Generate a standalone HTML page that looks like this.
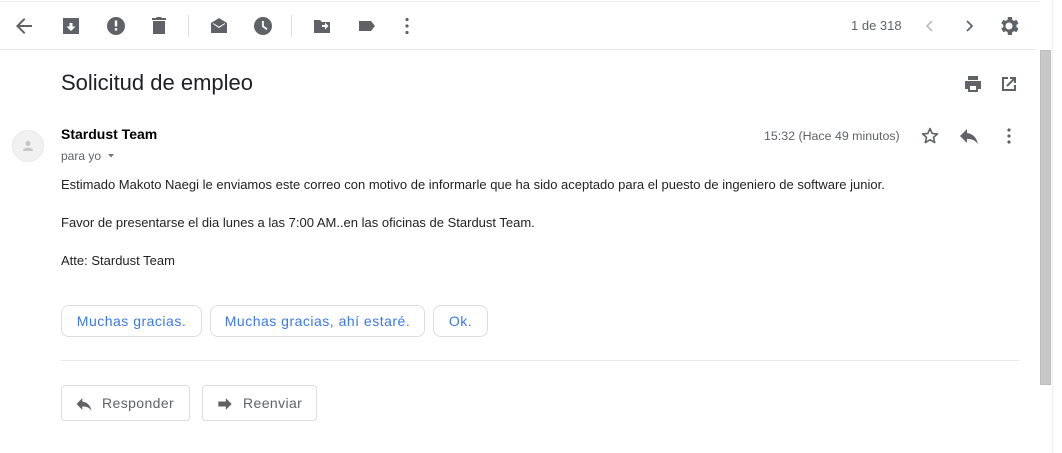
<!DOCTYPE html>
<html><head><meta charset="utf-8"><style>
*{margin:0;padding:0;box-sizing:border-box}
body{width:1062px;height:453px;background:#fff;font-family:"Liberation Sans",Arial,sans-serif;position:relative;overflow:hidden;color:#222}
.a{position:absolute}
svg{position:absolute;fill:#5f6368}
.t{font-size:13px;color:#222}
.chip{position:absolute;top:305px;height:32px;border:1px solid #dadce0;border-radius:8px;color:#3b78e7;font-size:14px;line-height:30px;text-align:center;letter-spacing:.5px}
.btn{position:absolute;top:385px;height:36px;border:1px solid #dadce0;border-radius:4px;color:#5f6368;font-size:14px;line-height:34px;letter-spacing:.4px}
</style></head><body>
<div class="a" style="left:0;top:1px;width:1040px;height:1px;background:#eee"></div>
<div class="a" style="left:0;top:49px;width:1036px;height:1px;background:#e8e8e8"></div>
<div class="a" style="left:1040px;top:50px;width:11px;height:335px;background:#c8c8c8;border:1px solid #bdbdbd"></div>
<div class="a" style="left:1052px;top:0;width:1px;height:453px;background:#eee"></div>

<svg style="left:12px;top:14px" width="24" height="24" viewBox="0 0 24 24"><path d="M20 11H7.83l5.59-5.59L12 4l-8 8 8 8 1.41-1.41L7.83 13H20v-2z"/></svg>
<svg style="left:59px;top:14px" width="24" height="24" viewBox="0 0 24 24"><path d="M4 4h16v16H4z M12 17l4.5-4.5H13.5V9h-3v3.5H7.5z" fill-rule="evenodd"/></svg>
<svg style="left:104px;top:14px" width="24" height="24" viewBox="0 0 24 24"><path d="M12 3a9 9 0 100 18 9 9 0 000-18zm1.2 13.5h-2.4v-2.3h2.4zm0-4h-2.4V6.5h2.4z" fill-rule="evenodd"/></svg>
<svg style="left:147px;top:14px" width="24" height="24" viewBox="0 0 24 24"><path d="M6 7h12v13H6zM5 4h4l1-1h4l1 1h4v2H5z"/></svg>
<div class="a" style="left:188px;top:15px;width:1px;height:22px;background:#e0e0e0"></div>
<svg style="left:207px;top:14px" width="24" height="24" viewBox="0 0 24 24"><path d="M4 9l8-5 8 5v10H4zM6 10l6 4 6-4v-1l-6 3.6L6 9z" fill-rule="evenodd"/></svg>
<svg style="left:251px;top:14px" width="24" height="24" viewBox="0 0 24 24"><path d="M12 3a9 9 0 100 18 9 9 0 000-18zm3.5 13l-4.5-3.2V7h1.8v4.9l3.7 2.6z" fill-rule="evenodd"/></svg>
<div class="a" style="left:291px;top:15px;width:1px;height:22px;background:#e0e0e0"></div>
<svg style="left:310px;top:14px" width="24" height="24" viewBox="0 0 24 24"><path d="M4 6h6l2 2h8v11H4zM12 11v2h3v2.5l3.5-3.5L15 8.5V11z" fill-rule="evenodd"/></svg>
<svg style="left:355px;top:14px" width="24" height="24" viewBox="0 0 24 24"><path d="M4 7h12l4 5-4 5H4z"/></svg>
<svg style="left:395px;top:14px" width="24" height="24" viewBox="0 0 24 24"><circle cx="12" cy="5.5" r="1.6"/><circle cx="12" cy="12" r="1.6"/><circle cx="12" cy="18.5" r="1.6"/></svg>
<div class="a" style="left:851px;top:18px;font-size:13px;color:#5f6368">1 de 318</div>
<svg style="left:918px;top:14px" width="24" height="24" viewBox="0 0 24 24"><path d="M14 7l-5 5 5 5" fill="none" stroke="#bbb" stroke-width="1.6"/></svg>
<svg style="left:957px;top:14px" width="24" height="24" viewBox="0 0 24 24"><path d="M10 7l5 5-5 5" fill="none" stroke="#5f6368" stroke-width="1.8"/></svg>
<svg style="left:997px;top:14px" width="24" height="24" viewBox="0 0 24 24"><path d="M19.4 13a7.5 7.5 0 000-2l2.1-1.6-2-3.5-2.5 1a7 7 0 00-1.7-1L14.9 3h-4l-.4 2.9a7 7 0 00-1.7 1l-2.5-1-2 3.5L6.4 11a7.5 7.5 0 000 2l-2.1 1.6 2 3.5 2.5-1a7 7 0 001.7 1l.4 2.9h4l.4-2.9a7 7 0 001.7-1l2.5 1 2-3.5zM12 15.5a3.5 3.5 0 110-7 3.5 3.5 0 010 7z" fill-rule="evenodd"/></svg>

<div class="a" style="left:61px;top:70px;font-size:22px;color:#202124">Solicitud de empleo</div>
<svg style="left:961px;top:72px" width="24" height="24" viewBox="0 0 24 24"><path d="M7 4h10v4H7zM4 9h16v8h-3v3H7v-3H4zM9 14v4h6v-4z" fill-rule="evenodd"/></svg>
<svg style="left:997px;top:72px" width="24" height="24" viewBox="0 0 24 24"><path d="M5 5h6v2H7v10h10v-4h2v6H5zM13 5h6v6h-2V8.4l-6.3 6.3-1.4-1.4L15.6 7H13z"/></svg>

<div class="a" style="left:12px;top:130px;width:32px;height:32px;border-radius:50%;background:#f1f1f1;border:1px solid #eaeaea"></div>
<svg style="left:20px;top:138px" width="16" height="16" viewBox="0 0 16 16"><circle cx="8" cy="5.5" r="2.5" fill="#c4c4c4"/><path d="M3 13c0-2.5 3-3.3 5-3.3s5 .8 5 3.3z" fill="#c4c4c4"/></svg>
<div class="a" style="left:61px;top:126px;font-size:14px;font-weight:bold;color:#000">Stardust Team</div>
<div class="a" style="left:61px;top:149px;font-size:12px;color:#5f6368">para yo</div>
<svg style="left:106px;top:151px" width="10" height="10" viewBox="0 0 10 10"><path d="M2 3h6L5 6.5z" fill="#777"/></svg>
<div class="a" style="left:764px;top:129px;font-size:12.4px;color:#5f6368">15:32 (Hace 49 minutos)</div>
<svg style="left:918px;top:124px" width="24" height="24" viewBox="0 0 24 24"><path d="M12 4.5l2.2 5 5.3.4-4 3.5 1.2 5.2L12 15.8l-4.7 2.8 1.2-5.2-4-3.5 5.3-.4z" fill="none" stroke="#5f6368" stroke-width="1.6" stroke-linejoin="round"/></svg>
<svg style="left:957px;top:124px" width="24" height="24" viewBox="0 0 24 24"><path d="M10 9V5l-7 7 7 7v-4.1c5 0 8.5 1.6 11 5.1-1-5-4-10-11-11z"/></svg>
<svg style="left:997px;top:124px" width="24" height="24" viewBox="0 0 24 24"><circle cx="12" cy="6" r="1.6"/><circle cx="12" cy="12" r="1.6"/><circle cx="12" cy="18" r="1.6"/></svg>

<div class="a t" style="left:61px;top:177px">Estimado Makoto Naegi le enviamos este correo con motivo de informarle que ha sido aceptado para el puesto de ingeniero de software junior.</div>
<div class="a t" style="left:61px;top:215px">Favor de presentarse el dia lunes a las 7:00 AM..en las oficinas de Stardust Team.</div>
<div class="a t" style="left:61px;top:253px">Atte: Stardust Team</div>

<div class="chip" style="left:61px;width:141px">Muchas gracias.</div>
<div class="chip" style="left:210px;width:215px">Muchas gracias, ahí estaré.</div>
<div class="chip" style="left:433px;width:55px">Ok.</div>
<div class="a" style="left:61px;top:360px;width:958px;height:1px;background:#e8e8e8"></div>

<div class="btn" style="left:61px;width:129px"><svg style="left:12px;top:8px" width="20" height="20" viewBox="0 0 24 24"><path d="M10 9V5l-7 7 7 7v-4.1c5 0 8.5 1.6 11 5.1-1-5-4-10-11-11z"/></svg><span class="a" style="left:40px;top:0">Responder</span></div>
<div class="btn" style="left:202px;width:115px"><svg style="left:12px;top:8px" width="20" height="20" viewBox="0 0 24 24"><path d="M13 5v4H4v6h9v4l7-7z"/></svg><span class="a" style="left:40px;top:0">Reenviar</span></div>
</body></html>
